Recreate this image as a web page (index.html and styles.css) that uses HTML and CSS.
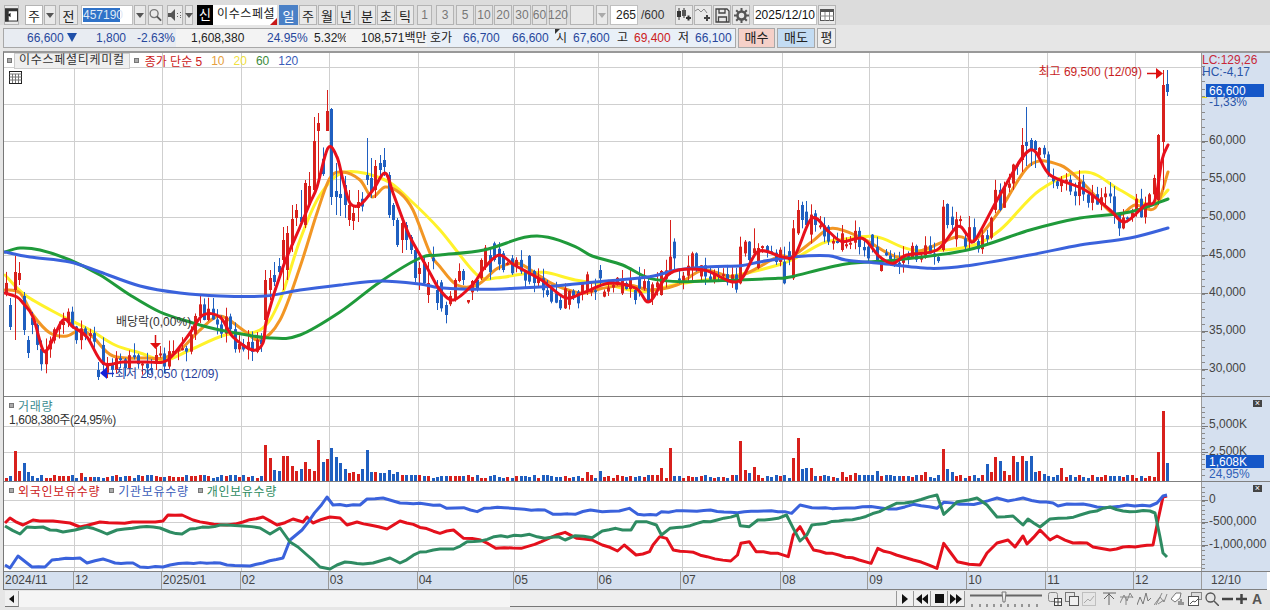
FILE: index.html
```html
<!DOCTYPE html>
<html lang="ko">
<head>
    <meta charset="UTF-8">
    <title>이수스페셜티케미컬 차트</title>
    <link rel="stylesheet" href="styles.css">
</head>
<body>
    <div class="app">
        <div class="toolbar">
            <div class="btn w-screen"><svg width="14" height="14" viewBox="0 0 14 14"><rect x="0.5" y="0.5" width="13" height="13" fill="#fff" stroke="#222"/><path d="M0 0h14v3H0zM0 3h4v11H0z" fill="#333"/><path d="M3 7l3-2.500v5z" fill="#111"/></svg></div>
            <div class="btn w-type white m6">주</div>
            <div class="btn w-drop m1"><i class="caret"></i></div>
            <div class="btn w-jeon m3">전</div>
            <div class="code-input m3"><span class="selected">457190</span></div>
            <div class="btn w-drop m1"><i class="caret"></i></div>
            <div class="btn w-search m2"><svg width="14" height="14" viewBox="0 0 14 14"><circle cx="5.500" cy="5.500" r="4.300" fill="none" stroke="#777" stroke-width="1.500"/><path d="M8.500 8.500l4.500 4.500" stroke="#555" stroke-width="2"/></svg></div>
            <div class="btn w-speaker m4"><svg width="14" height="12" viewBox="0 0 14 12"><path d="M0 4h3l4-4v12l-4-4H0z" fill="#555"/><path d="M9 4h1v1H9zM9 7h1v1H9zM12 3h1v1h-1zM12 6h1v1h-1zM12 8h1v1h-1z" fill="#666"/></svg></div>
            <div class="btn w-dropsm m2"><i class="caret"></i></div>
            <div class="new-tag m4">신</div>
            <div class="name-box">이수스페셜<i class="corner"></i></div>
            <div class="btn w-day active m2">일</div>
            <div class="btn w-per m1">주</div>
            <div class="btn w-per m1">월</div>
            <div class="btn w-per m1">년</div>
            <div class="btn w-per m3">분</div>
            <div class="btn w-per m1">초</div>
            <div class="btn w-per m1">틱</div>
            <div class="btn w-one m3 dim">1</div>
            <div class="btn w-num m4 dim">3</div>
            <div class="btn w-num m2 dim">5</div>
            <div class="btn w-num m1 dim">10</div>
            <div class="btn w-num m1 dim">20</div>
            <div class="btn w-num m1 dim">30</div>
            <div class="btn w-one m1 dim">60</div>
            <div class="btn w-num m2 dim">120</div>
            <div class="btn w-blank m3"></div>
            <div class="btn w-drop m2"><i class="caret light"></i></div>
            <div class="count-box m2">265</div>
            <div class="count-total">/600</div>
            <div class="btn w-tool m11"><svg width="16" height="14" viewBox="0 0 16 14"><path d="M3 0v3M3 9v3M8 0v2M8 8v2" stroke="#333"/><rect x="1" y="3" width="4" height="6" fill="#333"/><rect x="6" y="2" width="4" height="6" fill="#555"/><path d="M10 10h5M12.500 7.500v5" stroke="#333" stroke-width="2"/></svg></div>
            <div class="btn w-tool m1"><svg width="16" height="14" viewBox="0 0 16 14"><path d="M0 3l3-2 3 3 3-3 3 4" fill="none" stroke="#888"/><path d="M9 10h6M12 7v6" stroke="#444" stroke-width="2"/></svg></div>
            <div class="btn w-tool m1"><svg width="15" height="15" viewBox="0 0 15 15"><path d="M1 1h11l2 2v11H1z" fill="none" stroke="#444" stroke-width="1.300"/><path d="M4 1v4h6V1M3.500 14V9h8v5" fill="none" stroke="#444" stroke-width="1.300"/></svg></div>
            <div class="btn w-tool m1"><svg width="15" height="15" viewBox="0 0 15 15"><circle cx="7.500" cy="7.500" r="4" fill="none" stroke="#555" stroke-width="2.500"/><path d="M7.500 0v3M7.500 12v3M0 7.500h3M12 7.500h3M2.200 2.200l2 2M10.800 10.800l2 2M2.200 12.800l2-2M10.800 4.200l2-2" stroke="#555" stroke-width="2"/></svg></div>
            <div class="date-box m3">2025/12/10</div>
            <div class="btn w-tool m1"><svg width="14" height="12" viewBox="0 0 14 12"><rect x="0.500" y="0.500" width="13" height="11" fill="#fff" stroke="#555"/><path d="M0 0h14v3H0z" fill="#555"/><path d="M0 7h14M5 3v9M9.500 3v9" stroke="#888"/></svg></div>
        </div>

        <div class="quote-row">
            <div class="quote-seg seg-price">
                <span class="q-price blue">66,600<i class="down"></i></span>
                <span class="q-chg blue">1,800</span>
                <span class="q-pct blue">-2.63%</span>
            </div>
            <div class="quote-seg seg-vol">
                <span class="q-vol">1,608,380</span>
                <span class="q-turn blue">24.95%</span>
                <span class="q-frn">5.32%</span>
            </div>
            <div class="quote-seg seg-amt">108,571백만</div>
            <div class="quote-seg seg-hoga">
                <span class="q-hoga">호가</span>
                <span class="q-ask blue">66,700</span>
                <span class="q-bid blue">66,600</span>
                <span class="q-open-label"><i class="flag"></i>시</span>
                <span class="q-open blue">67,600</span>
                <span class="q-high-label">고</span>
                <span class="q-high red">69,400</span>
                <span class="q-low-label">저</span>
                <span class="q-low blue">66,100</span>
            </div>
            <div class="order buy">매수</div>
            <div class="order sell">매도</div>
            <div class="order even">평</div>
        </div>

        <div class="charts">
            <div class="pane pane-main">
                <svg class="plot" id="plotMain"></svg>
                <svg class="axis" id="axisMain"></svg>
                <div class="legend">
                    <i class="dot"></i><span class="legend-name">이수스페셜티케미컬</span>
                    <i class="dot"></i><span class="red legend-ma">종가 단순 5</span>
                    <span class="c-orange">10</span><span class="c-yellow">20</span><span class="c-green">60</span><span class="c-blue">120</span>
                </div>
                <div class="grid-btn"><svg width="13" height="13" viewBox="0 0 13 13"><rect x="0.500" y="0.500" width="12" height="12" fill="#fff" stroke="#222"/><path d="M0.500 3h12M0.500 6h12M0.500 9h12M3.500 3v9M6.500 3v9M9.500 3v9" stroke="#777"/></svg></div>
            </div>
            <div class="pane pane-vol">
                <svg class="plot" id="plotVol"></svg>
                <svg class="axis" id="axisVol"></svg>
                <div class="legend legend-sub">
                    <i class="dot"></i><span class="c-teal">거래량</span>
                </div>
                <div class="vol-text">1,608,380주(24,95%)</div>
                <i class="close-x">×</i>
            </div>
            <div class="pane pane-inv">
                <svg class="plot" id="plotInv"></svg>
                <svg class="axis" id="axisInv"></svg>
                <div class="legend legend-sub">
                    <i class="dot"></i><span class="red">외국인보유수량</span>
                    <i class="dot"></i><span class="c-blue">기관보유수량</span>
                    <i class="dot"></i><span class="c-sea">개인보유수량</span>
                </div>
                <i class="close-x">×</i>
            </div>
            <div class="date-axis">
                <div class="date-cells" id="dateCells"></div>
                <div class="date-last">12/10</div>
            </div>
        </div>

        <div class="bottom-bar">
            <div class="scroll-btn"><i class="tri-left"></i></div>
            <div class="scroll-track"></div>
            <div class="scroll-thumb"></div>
            <div class="play-btn"><svg width="8" height="10"><path d="M1 0l6 5-6 5z" fill="#111"/></svg></div>
            <div class="play-btn"><svg width="12" height="10"><path d="M6 0L0 5l6 5zM12 0L6 5l6 5z" fill="#111"/></svg></div>
            <div class="play-btn"><svg width="9" height="9"><rect width="9" height="9" fill="#111"/></svg></div>
            <div class="play-btn"><svg width="12" height="10"><path d="M0 0l6 5-6 5zM6 0l6 5-6 5z" fill="#111"/></svg></div>
            <div class="slider"><svg width="72" height="16"><path d="M0 4.500h33M36 4.500h36" stroke="#666" stroke-width="2"/><path d="M32 1h4l-1 10h-2z" fill="#eee" stroke="#777"/><path d="M2 13v3M10 13v3M17 13v3M24 13v3M31 13v3M38 13v3M45 13v3M52 13v3M59 13v3M67 13v3" stroke="#444"/></svg></div>
            <div class="bar-icons">
                <svg width="14" height="14"><rect x="0.500" y="0.500" width="9" height="9" rx="2" fill="none" stroke="#888"/><rect x="6.500" y="6.500" width="7" height="7" fill="#fff" stroke="#444"/><path d="M10 7v6M7 10h6" stroke="#444"/></svg>
                <svg width="14" height="14"><rect x="0.500" y="0.500" width="9" height="9" fill="none" stroke="#777"/><rect x="4.500" y="4.500" width="9" height="9" fill="#f0f0f0" stroke="#555"/></svg>
                <svg width="14" height="14"><rect x="0.500" y="0.500" width="13" height="13" fill="none" stroke="#999" stroke-dasharray="1 1"/><path d="M2 11l4-4 2 2 4-5" fill="none" stroke="#aaa"/></svg>
                <svg width="14" height="14" class="sep"><path d="M0 1h13M6 1v12M1 7l5-5 5 5" fill="none" stroke="#666"/></svg>
                <svg width="14" height="14"><path d="M0 5h13M6 5v8M0 11l4-8 3 6 3-8 3 5" fill="none" stroke="#888"/></svg>
                <svg width="14" height="14"><path d="M0 13l3-8 3 7 3-11 2 8 3-3" fill="none" stroke="#777"/></svg>
                <svg width="14" height="14"><path d="M0 13l6-8 4 5 3-8M2 13l6-12M4 12l6-4" fill="none" stroke="#888"/></svg>
                <svg width="14" height="14"><path d="M0 7l5-6h5l-1 5-5 4z" fill="#fff" stroke="#777"/><path d="M8 13V9M10 13V7M12 13V10" stroke="#444"/></svg>
                <svg width="14" height="14"><rect x="3.500" y="0.500" width="10" height="7" fill="#ddd" stroke="#888"/><rect x="0.500" y="4.500" width="10" height="9" fill="#fff" stroke="#555"/><path d="M2 12l3-3 2 1 3-3" fill="none" stroke="#555"/></svg>
                <svg width="14" height="14"><circle cx="5.500" cy="5.500" r="4.500" fill="none" stroke="#555" stroke-width="1.300"/><path d="M9 9l5 5" stroke="#555" stroke-width="1.500"/></svg>
                <svg width="11" height="14"><path d="M0 7h11" stroke="#444" stroke-width="2.500"/></svg>
                <svg width="11" height="14"><path d="M0 7h11M5.500 2v10" stroke="#444" stroke-width="2.500"/></svg>
                <span class="font-a">A</span>
            </div>
        </div>
    </div>
    <script src="chart.js"></script>
</body>
</html>
```

FILE: styles.css
```css
body {
    margin: 0;
    width: 1270px;
    height: 610px;
    overflow: hidden;
    background: #e6e6e6;
    font-family: "Liberation Sans", "Noto Sans CJK KR", sans-serif;
    font-size: 12px;
    color: #222;
}
i {
    font-style: normal;
}
svg {
    display: block;
}
.blue { color: #27479c; }
.red { color: #cc2020; }
.c-orange { color: #e6a040; }
.c-yellow { color: #f0e040; }
.c-green { color: #3c8a3c; }
.c-blue { color: #3a5cb8; }
.c-teal { color: #3c8c90; }
.c-sea { color: #2e8b62; }

/* 상단 툴바 */
.toolbar {
    display: flex;
    height: 20px;
    padding: 5px 0 0 4px;
    margin-bottom: 3px;
    background: #dcdcdc;
}
.btn {
    display: flex;
    align-items: center;
    justify-content: center;
    box-sizing: border-box;
    height: 20px;
    background: #e9e9e9;
    border: 1px solid #b4b4b4;
    font-size: 13px;
}
.btn.white { background: #fff; }
.btn.active { background: #4a80c6; color: #fff; border-color: #4a80c6; }
.btn.dim { color: #777; background: #e4e4e4; font-size: 12px; }
.m1 { margin-left: 1px; }
.m2 { margin-left: 2px; }
.m3 { margin-left: 3px; }
.m4 { margin-left: 4px; }
.m6 { margin-left: 6px; }
.m11 { margin-left: 11px; }
.w-screen { width: 15px; }
.w-type { width: 18px; }
.w-drop { width: 12px; }
.w-dropsm { width: 8px; }
.w-jeon { width: 19px; }
.w-search { width: 15px; }
.w-speaker { width: 16px; }
.w-day { width: 19px; }
.w-per { width: 18px; }
.w-one { width: 15px; }
.w-num { width: 18px; }
.w-blank { width: 24px; }
.w-tool { width: 18px; }
.caret {
    width: 0;
    height: 0;
    border-left: 4px solid transparent;
    border-right: 4px solid transparent;
    border-top: 5px solid #555;
}
.caret.light { border-top-color: #aaa; }
.code-input {
    box-sizing: border-box;
    width: 52px;
    height: 20px;
    padding: 2px 1px;
    background: #fff;
    border: 1px solid #c0c0c0;
    line-height: 14px;
}
.selected {
    display: block;
    width: 37px;
    background: #2f72c8;
    color: #dfe8f5;
}
.new-tag {
    width: 16px;
    height: 20px;
    background: #000;
    color: #fff;
    text-align: center;
    line-height: 20px;
    font-size: 13px;
}
.name-box {
    position: relative;
    box-sizing: border-box;
    width: 64px;
    height: 20px;
    padding-left: 4px;
    overflow: hidden;
    background: #fff;
    line-height: 19px;
    font-size: 12px;
    letter-spacing: 0.6px;
    white-space: nowrap;
}
.corner {
    position: absolute;
    right: 0;
    bottom: 0;
    border-left: 7px solid transparent;
    border-bottom: 7px solid #c81818;
}
.count-box, .date-box {
    box-sizing: border-box;
    height: 20px;
    background: #fff;
    border: 1px solid #c0c0c0;
    line-height: 18px;
    text-align: right;
    padding-right: 1px;
}
.count-box { width: 28px; }
.count-total { width: 23px; padding-left: 3px; line-height: 20px; color: #333; }
.date-box { width: 64px; color: #111; }

/* 시세 행 */
.quote-row {
    display: flex;
    height: 20px;
    padding-left: 3px;
    margin-bottom: 3px;
}
.quote-seg {
    position: relative;
    box-sizing: border-box;
    height: 20px;
    border-top: 1px solid #a8a8a8;
    border-bottom: 1px solid #a8a8a8;
    line-height: 18px;
    white-space: nowrap;
}
.quote-seg span { position: absolute; top: 0; }
.seg-price { width: 173px; background: #e8ecf2; border-left: 1px solid #a8a8a8; }
.seg-vol { width: 170px; background: #f3f3f3; }
.seg-amt { width: 81px; padding-left: 15px; background: #f3f3f3; }
.seg-hoga { width: 309px; background: #e9f0f8; border-right: 1px solid #a8a8a8; }
.q-price { left: 23px; }
.q-chg { left: 92px; }
.q-pct { left: 133px; }
.q-vol { left: 15px; }
.q-turn { left: 91px; }
.q-frn { left: 138px; }
.q-hoga { left: 3px; }
.q-ask { left: 36px; }
.q-bid { left: 85px; }
.q-open-label { left: 129px; }
.q-open { left: 146px; }
.q-high-label { left: 190px; }
.q-high { left: 207px; }
.q-low-label { left: 251px; }
.q-low { left: 268px; }
.down {
    display: inline-block;
    margin-left: 3px;
    border-left: 5px solid transparent;
    border-right: 5px solid transparent;
    border-top: 9px solid #1f4fa8;
}
.flag {
    position: absolute;
    left: -1px;
    top: 0;
    border-top: 5px solid #333;
    border-right: 5px solid transparent;
}
.order {
    box-sizing: border-box;
    height: 20px;
    margin-left: 3px;
    border: 1px solid #a8a8a8;
    text-align: center;
    line-height: 18px;
    font-size: 13px;
}
.buy { width: 37px; margin-left: 2px; background: #f5d0c8; }
.sell { width: 38px; margin-left: 2px; background: #c3dcf3; }
.even { width: 19px; margin-left: 2px; background: #eee; }

/* 차트 영역 */
.charts {
    box-sizing: border-box;
    height: 539px;
    margin-left: 3px;
    border-top: 2px solid #999;
    border-left: 1px solid #777;
    background: #fff;
}
.pane {
    position: relative;
    display: flex;
    box-sizing: border-box;
    border-bottom: 1px solid #808080;
}
.pane-main { height: 344px; }
.pane-vol { height: 85px; }
.pane-inv { height: 90px; }
.plot {
    width: 1197px;
    height: 100%;
    flex: none;
}
.axis {
    width: 68px;
    height: 100%;
    flex: none;
    background: #d5e0ef;
    border-left: 1px solid #9a9a9a;
}
.plot text, .axis text {
    font-family: "Liberation Sans", "Noto Sans CJK KR", sans-serif;
    font-size: 12px;
}
.legend {
    position: absolute;
    left: 3px;
    top: 0;
    display: flex;
    align-items: center;
    height: 15px;
    white-space: nowrap;
}
.legend .dot {
    box-sizing: border-box;
    width: 5px;
    height: 5px;
    background: #aaa;
    border: 1px solid #777;
}
.legend-name {
    height: 14px;
    margin: 0 4px 0 2px;
    padding: 0 4px;
    background: #efefef;
    border: 1px solid #ccc;
    line-height: 13px;
    letter-spacing: 0.7px;
    color: #333;
}
.legend-ma { margin: 0 9px 0 6px; }
.c-orange, .c-yellow, .c-green { margin-right: 9px; }
.legend-sub { left: 5px; top: 1px; }
.legend-sub .dot { margin-right: 4px; }
.legend-sub span { margin-right: 9px; letter-spacing: 0.7px; }
.vol-text {
    position: absolute;
    left: 5px;
    top: 13px;
    font-size: 12px;
    letter-spacing: -0.35px;
    color: #333;
}
.grid-btn {
    position: absolute;
    left: 5px;
    top: 18px;
}
.close-x {
    position: absolute;
    right: 8px;
    top: 3px;
    width: 9px;
    height: 7px;
    background: #444;
    color: #fff;
    font-size: 9px;
    line-height: 7px;
    text-align: center;
}
.date-axis {
    display: flex;
    height: 17px;
    margin-right: 3px;
    background: #d5e0ef;
    border-bottom: 1px solid #808080;
}
.date-cells {
    display: flex;
    width: 1198px;
    flex: none;
    border-right: 1px solid #9a9a9a;
    box-sizing: border-box;
}
.date-cell {
    box-sizing: border-box;
    padding-left: 1px;
    line-height: 17px;
    color: #444;
    border-right: 1px solid #999;
}
.date-cell:last-child { border-right: 0; }
.date-last { padding-left: 9px; line-height: 17px; color: #444; }

/* 하단 바 */
.bottom-bar {
    position: relative;
    display: flex;
    align-items: center;
    height: 18px;
    padding-left: 5px;
}
.scroll-btn {
    display: flex;
    align-items: center;
    justify-content: center;
    box-sizing: border-box;
    width: 14px;
    height: 16px;
    background: #f0f0f0;
    border-right: 1px solid #999;
    border-bottom: 1px solid #777;
}
.tri-left {
    border-top: 4px solid transparent;
    border-bottom: 4px solid transparent;
    border-right: 5px solid #111;
}
.scroll-track {
    width: 491px;
    height: 16px;
    background: #f5f5f5;
}
.scroll-thumb {
    box-sizing: border-box;
    width: 387px;
    height: 16px;
    background: #efefef;
    border-bottom: 1px solid #777;
    border-right: 1px solid #999;
}
.play-btn {
    display: flex;
    align-items: center;
    justify-content: center;
    box-sizing: border-box;
    width: 17px;
    height: 16px;
    background: #f0f0f0;
    border-right: 1px solid #999;
    border-bottom: 1px solid #777;
}
.slider { margin-left: 5px; }
.bar-icons {
    display: flex;
    align-items: center;
    gap: 3px;
    margin-left: 6px;
}
.bar-icons .sep { margin-left: 4px; }
.font-a { font-weight: 700; font-size: 14px; color: #555; margin-left: 2px; }
```

FILE: chart.js
```js
const NS = 'http://www.w3.org/2000/svg';

// 확대 캡처에서 읽은 중간 구간 좌표를 화면 좌표로
function mid(points) {
    return points.map(p => [440 + p[0] / 2.958, 195 + p[1] / 3]);
}

// 이동평균선 (x, y 화면 좌표)
const ma5 = [[5,293],[17,297],[23,303],[33,317],[43,350],[50,345],[63,320],[73,327],[87,337],[103,363],[123,362],[147,362],[163,362],[173,355],[190,333],[203,315],[220,317],[233,337],[253,350],[263,343],[267,318],[283,267],[300,227],[310,203],[317,187],[328,148],[337,157],[343,180],[350,203],[360,205],[373,190],[385,173],[393,193],[403,220],[410,237],[420,255],[430,273]]
    .concat(mid([[0,285],[40,315],[100,265],[130,220],[175,180],[220,210],[300,255],[370,308],[420,295],[500,265],[580,280],[620,320],[680,235],[780,225],[880,260],[940,170],[1010,185],[1050,180],[1100,70],[1150,110],[1190,140],[1250,130],[1300,185],[1340,205],[1380,180],[1470,165],[1530,95],[1560,120]]))
    .concat([[975,240],[1000,195],[1030,150],[1050,175],[1085,190],[1110,210],[1125,222],[1145,205],[1155,200],[1162,160],[1168,145]]);
const ma10 = [[5,290],[20,293],[33,315],[50,333],[67,336],[80,330],[93,337],[113,356],[147,358],[163,358],[180,350],[200,330],[220,316],[243,330],[260,340],[280,320],[300,267],[317,213],[330,178],[343,172],[360,180],[372,197],[385,187],[400,193],[413,210],[430,253]]
    .concat(mid([[0,215],[50,270],[110,270],[170,220],[230,205],[290,240],[340,270],[420,295],[480,280],[560,270],[620,285],[700,270],[780,225],[880,245],[1000,185],[1040,185],[1100,140],[1160,100],[1250,130],[1350,185],[1430,165],[1530,125]]))
    .concat([[975,240],[1000,210],[1030,165],[1060,165],[1085,185],[1115,215],[1135,205],[1155,208],[1168,172]]);
const ma20 = [[5,275],[25,295],[60,315],[90,330],[115,345],[140,353],[165,360],[190,350],[225,335],[260,330],[280,300],[300,240],[320,195],[345,172],[385,180],[410,200]]
    .concat(mid([[0,105],[110,240],[170,248],[240,238],[310,232],[400,255],[500,270],[600,290],[700,268],[880,240],[1000,210],[1050,190],[1130,145],[1180,135],[1290,125],[1400,165],[1560,155]]))
    .concat([[1000,230],[1040,190],[1085,172],[1120,190],[1150,205],[1168,190]]);
const ma60 = [[5,252],[20,248],[40,250],[70,260],[100,275],[130,295],[160,312],[190,322],[220,330],[270,338],[300,335],[340,312],[380,282],[420,258]]
    .concat(mid([[0,180],[130,165],[250,127],[320,127],[400,155],[450,183],[540,210],[620,250],[720,260],[880,255],[1000,250],[1040,245],[1200,207],[1350,195],[1560,165]]))
    .concat([[1030,230],[1080,218],[1130,212],[1168,199]]);
const ma120 = [[5,252],[30,257],[70,262],[100,272],[140,286],[180,293],[220,296],[265,296],[300,290],[340,285],[380,281],[420,284]]
    .concat(mid([[0,278],[130,283],[250,278],[350,272],[450,262],[620,245],[700,225],[800,215],[890,212],[950,200],[1050,185],[1150,182],[1200,195],[1300,205],[1450,220],[1560,212]]))
    .concat([[1030,255],[1080,245],[1130,238],[1168,228]]);

// 투자자별 보유수량
const foreign = [[5,523],[10,518],[23,525],[33,520],[53,521],[70,523],[80,527],[100,522],[117,523],[140,522],[163,521],[168,515],[182,515],[193,520],[207,523],[227,525],[243,522],[263,517],[277,525],[293,519],[303,522],[307,517],[313,523],[330,517],[340,518],[347,525],[357,522],[370,525],[387,529],[400,521]]
    .concat(mid([[0,1015],[40,1005],[70,1030],[120,1035],[165,1060],[190,1058],[240,1060],[300,1040],[370,1012],[405,1030],[450,1035],[480,1050],[525,1068],[545,1050],[580,1080],[620,1070],[630,1050],[650,1025],[670,1030],[690,1065],[750,1072],[790,1085],[860,1098],[880,1080],[890,1045],[915,1040],[935,1070],[1000,1075],[1030,1085],[1045,1020],[1065,995],[1090,1040],[1105,1065],[1180,1080],[1240,1095],[1275,1105],[1295,1060],[1350,1080],[1400,1095],[1470,1120],[1490,1045],[1530,1100],[1565,1108]]))
    .concat([[980,565],[987,553],[997,543],[1008,540],[1015,547],[1023,536],[1027,544],[1040,530],[1050,540],[1057,536],[1073,543],[1087,543],[1093,547],[1110,550],[1123,547],[1153,545],[1158,520],[1163,497],[1167,496]]);
const institution = [[5,565],[10,568],[18,556],[32,567],[45,567],[52,560],[80,558],[87,563],[103,559],[115,563],[133,563],[140,567],[163,567],[170,565],[187,563],[220,563],[227,565],[250,566],[263,563],[283,558],[290,540],[302,530],[327,497],[333,505],[360,505],[367,499],[383,498],[400,503]]
    .concat(mid([[0,930],[20,940],[70,938],[110,950],[130,940],[190,938],[250,943],[310,945],[335,958],[400,958],[445,945],[480,950],[530,948],[560,940],[585,958],[640,960],[655,950],[740,948],[800,945],[860,952],[960,948],[1020,950],[1040,955],[1065,930],[1100,938],[1180,940],[1250,935],[1300,938],[1350,942],[1400,928],[1470,940],[1490,922],[1560,928]]))
    .concat([[980,503],[997,498],[1008,501],[1023,498],[1040,502],[1053,503],[1058,506],[1067,504],[1083,504],[1097,507],[1113,507],[1127,505],[1150,506],[1157,503],[1163,496],[1167,495]]);
const individual = [[5,526],[20,534],[27,527],[43,527],[50,530],[63,532],[87,527],[107,534],[117,530],[140,527],[160,528],[170,532],[182,534],[190,529],[227,525],[243,526],[260,528],[270,534],[280,528],[290,542],[298,547],[307,555],[320,567],[330,569],[337,565],[345,562],[363,564],[373,563],[390,558],[400,563],[420,552]]
    .concat(mid([[0,1062],[40,1062],[80,1040],[120,1038],[160,1025],[240,1022],[265,1018],[310,1030],[350,1025],[370,1035],[400,1022],[450,1028],[480,1008],[520,1000],[540,1005],[565,1005],[580,980],[610,980],[640,990],[655,1020],[680,1000],[740,992],[760,985],[820,975],[880,960],[888,992],[915,995],[940,975],[1000,970],[1025,960],[1045,1000],[1065,1038],[1085,1020],[1100,990],[1180,978],[1240,970],[1300,950],[1350,925],[1400,920],[1470,900],[1490,958],[1530,920],[1565,915]]))
    .concat([[977,498],[987,505],[997,517],[1013,516],[1023,525],[1028,519],[1040,527],[1050,519],[1067,518],[1080,515],[1090,512],[1110,507],[1123,511],[1150,511],[1155,513],[1160,537],[1163,553],[1167,557]]);

// 눈에 띄는 봉: x, 몸통 위, 몸통 아래, 고가, 저가, 색
const fixedCandles = [
    [10,305,327,298,330,'b'],[14,272,290,256,340,'r'],[19,273,280,262,285,'r'],[23,296,330,292,335,'b'],[28,340,353,336,358,'b'],
    [99,370,377,362,380,'b'],[155,355,362,348,370,'r'],
    [265,280,320,270,330,'r'],[270,278,290,270,300,'r'],[274,275,282,262,286,'b'],[279,266,272,258,280,'b'],
    [284,240,260,227,290,'r'],[287,233,270,226,280,'r'],[292,219,245,205,252,'r'],[296,210,218,204,226,'r'],[300,217,222,190,225,'b'],
    [305,183,225,180,228,'r'],[309,186,205,172,206,'r'],[315,141,190,117,194,'r'],[319,123,131,113,180,'r'],[328,111,131,90,131,'r'],[331,109,197,108,205,'b'],
    [336,191,197,163,215,'b'],[341,194,198,170,216,'b'],[345,185,205,176,218,'b'],[349,205,220,190,226,'r'],[353,213,221,205,230,'r'],[358,202,208,190,222,'r'],
    [366,175,180,138,185,'b'],[371,178,192,158,198,'b'],[375,166,190,160,198,'r'],[380,163,170,155,178,'b'],[384,160,167,148,176,'b'],[388,175,215,172,218,'b'],
    [393,205,220,203,226,'b'],[397,220,245,218,247,'b'],[403,223,240,222,253,'r'],[408,225,240,222,250,'b'],[410,237,250,235,254,'b'],[416,250,278,248,282,'b'],
    [420,268,274,262,290,'r'],[424,262,283,258,286,'b'],[428,283,295,262,303,'r'],[436,290,303,280,310,'b'],
    [1026,142,146,107,166,'b'],[1023,145,160,128,172,'r'],[1031,140,150,138,166,'b'],[1036,141,150,140,168,'b'],
    [1159,135,200,134,205,'r'],[1163,85,142,70,190,'r'],[1167,84,92,70,96,'b']
];
const fixedMid = [
    [0,262,340,255,350,'b'],[18,330,360,320,385,'b'],[42,255,315,250,320,'r'],[55,228,258,205,262,'r'],[70,228,255,222,270,'b'],[97,258,292,255,315,'r'],[108,255,285,250,290,'b'],[123,195,250,190,255,'r'],[135,158,215,150,225,'r'],[160,145,195,140,200,'b'],[187,175,225,168,232,'b'],[213,190,235,180,240,'b'],[263,183,260,180,268,'b'],[330,280,320,270,325,'b'],[357,315,340,300,345,'b'],[368,280,340,265,342,'r'],[408,290,325,285,340,'b'],[433,238,290,230,300,'r'],[475,225,250,210,270,'b'],[540,255,295,225,300,'r'],[578,285,315,280,328,'b'],[628,268,310,262,330,'r'],
    [655,228,300,225,302,'r'],[682,185,235,75,240,'r'],[693,140,190,130,225,'b'],[745,175,225,170,258,'r'],[757,175,225,172,230,'b'],[888,155,265,125,268,'r'],[903,140,175,135,185,'r'],[915,140,195,138,200,'b'],[930,160,175,100,180,'r'],[1018,200,265,155,268,'b'],[1045,100,250,75,255,'r'],[1060,45,115,15,120,'r'],[1072,30,75,20,100,'b'],[1085,50,90,18,95,'b'],[1110,55,90,45,110,'b'],[1150,95,140,90,150,'b'],[1190,115,165,90,170,'r'],[1268,155,190,150,200,'b'],[1305,195,228,185,230,'r'],[1489,35,165,15,170,'r'],[1502,27,90,25,100,'b'],[1515,65,90,35,115,'b'],[1550,130,155,115,165,'b']
];

// 거래량이 큰 날: x, 높이
const volSpikes = [[6,3],[10,5],[14,30],[19,10],[23,18],[28,9],[32,5],[80,8],[265,36],[270,23],[274,11],[279,10],[283,25],[287,25],[292,15],[296,10],[300,12],[305,19],[309,12],[314,10],[318,41],[323,19],[327,22],[331,33],[336,24],[340,18],[345,12],[349,8],[353,9],[358,7],[362,12],[366,31],[371,9],[375,9],[380,8],[384,8],[388,11],[393,7],[397,9],
    [986,17],[991,9],[995,24],[999,20],[1003,10],[1012,25],[1016,19],[1021,25],[1025,20],[1029,25],[1033,12],[1037,9],[1041,10],[1046,7],[1061,13],[1159,29],[1163,70],[1167,18]];
const volMid = [[433,9],[475,10],[655,13],[682,33],[888,40],[903,11],[915,8],[930,14],[1045,23],[1060,43],[1072,12],[1085,13],[1098,13],[1190,9],[1228,8],[1290,10],[1437,9],[1489,32],[1502,12],[1515,9]];

const STEP = (1167 - 6) / 264;
const COUNT = 265;
const COLORS = { r: '#d8201c', b: '#1f5fc0' };

let seed = 7;
function rnd() {
    seed = (seed * 16807) % 2147483647;
    return seed / 2147483647;
}

function el(parent, name, attrs, text) {
    const node = document.createElementNS(NS, name);
    for (const key in attrs) node.setAttribute(key, attrs[key]);
    if (text) node.textContent = text;
    parent.appendChild(node);
    return node;
}

function interp(line, x) {
    for (let i = 1; i < line.length; i++) {
        if (x <= line[i][0]) {
            const t = (x - line[i - 1][0]) / (line[i][0] - line[i - 1][0]);
            return line[i - 1][1] + (line[i][1] - line[i - 1][1]) * t;
        }
    }
    return line[line.length - 1][1];
}

function indexOfX(x) {
    return Math.round((x - 6) / STEP);
}

function setView(svg, x, y, w, h) {
    svg.setAttribute('viewBox', `${x} ${y} ${w} ${h}`);
}

const VLINES = [74, 162, 241, 329, 418, 514, 598, 682, 782, 869, 968, 1047, 1135];

function grid(svg, hlines, y0, y1) {
    hlines.forEach(y => el(svg, 'path', { d: `M4 ${y + 0.5}H1201`, stroke: '#cfcfcf', fill: 'none' }));
    VLINES.forEach(x => el(svg, 'path', { d: `M${x + 0.5} ${y0}V${y1}`, stroke: '#cfcfcf', fill: 'none' }));
}

// 이평선은 부드럽게 (Catmull-Rom)
function drawSmooth(svg, line, color) {
    let d = `M${line[0][0]} ${line[0][1]}`;
    for (let i = 0; i < line.length - 1; i++) {
        const p0 = line[Math.max(i - 1, 0)];
        const p1 = line[i];
        const p2 = line[i + 1];
        const p3 = line[Math.min(i + 2, line.length - 1)];
        const c1 = [p1[0] + (p2[0] - p0[0]) / 6, p1[1] + (p2[1] - p0[1]) / 6];
        const c2 = [p2[0] - (p3[0] - p1[0]) / 6, p2[1] - (p3[1] - p1[1]) / 6];
        d += `C${c1[0]} ${c1[1]} ${c2[0]} ${c2[1]} ${p2[0]} ${p2[1]}`;
    }
    el(svg, 'path', { d, fill: 'none', stroke: color, 'stroke-width': 3, 'stroke-linecap': 'round' });
}

// 보유수량은 자잘하게 흔들리도록 점을 채워 넣음
function drawJagged(svg, line, color) {
    const pts = [];
    line.forEach((p, i) => {
        pts.push(p);
        const next = line[i + 1];
        if (!next) return;
        const n = Math.floor((next[0] - p[0]) / 6);
        for (let k = 1; k < n; k++) {
            const t = k / n;
            pts.push([p[0] + (next[0] - p[0]) * t, p[1] + (next[1] - p[1]) * t + (rnd() - 0.5) * 1.6]);
        }
    });
    el(svg, 'polyline', {
        points: pts.map(p => p.join(',')).join(' '),
        fill: 'none',
        stroke: color,
        'stroke-width': 3,
        'stroke-linejoin': 'round'
    });
}

function buildCandles() {
    const list = [];
    let prev = interp(ma5, 6);
    for (let i = 0; i < COUNT; i++) {
        const x = 6 + STEP * i;
        const slope = Math.abs(interp(ma5, x + 4) - interp(ma5, x - 4));
        const amp = 8 + slope * 0.9;
        const close = interp(ma5, x) + (rnd() - 0.5) * amp * 2;
        let top = Math.min(prev, close);
        let bot = Math.max(prev, close);
        if (bot - top > 20) bot = top + 20;
        if (bot - top < 2) bot = top + 2;
        list.push({
            x,
            top,
            bot,
            hi: top - rnd() * 12,
            lo: Math.min(bot + rnd() * 10, 378),
            color: close < prev ? 'r' : 'b'
        });
        prev = close;
    }
    const put = f => {
        const i = indexOfX(f[0]);
        list[i] = { x: 6 + STEP * i, top: f[1], bot: f[2], hi: f[3], lo: f[4], color: f[5] };
    };
    fixedCandles.forEach(put);
    fixedMid.forEach(f => {
        const y = v => 195 + v / 3;
        put([440 + f[0] / 2.958, y(f[1]), y(f[2]), y(f[3]), y(f[4]), f[5]]);
    });
    return list;
}

function axisTicks(svg, y0, y1, step) {
    for (let y = y0; y <= y1; y += step) {
        el(svg, 'path', { d: `M1202 ${Math.round(y) + 0.5}h3`, stroke: '#8a8a8a' });
    }
}

function label(svg, x, y, text, color, anchor) {
    el(svg, 'text', { x, y, fill: color || '#444', 'text-anchor': anchor || 'start' }, text);
}

// 가격 차트
const plotMain = document.getElementById('plotMain');
const axisMain = document.getElementById('axisMain');
setView(plotMain, 4, 53, 1197, 343);
setView(axisMain, 1202, 53, 68, 343);
grid(plotMain, [67, 104, 141, 179, 217, 255, 293, 331, 369], 53, 396);

drawSmooth(plotMain, ma20, '#fff22a');
drawSmooth(plotMain, ma10, '#f29624');
const candles = buildCandles();
candles.forEach(c => {
    const x = Math.round(c.x);
    el(plotMain, 'path', { d: `M${x + 0.5} ${c.hi}V${c.lo}`, stroke: COLORS[c.color] });
    el(plotMain, 'rect', { x: x - 1, y: c.top, width: 3, height: c.bot - c.top, fill: COLORS[c.color] });
});
drawSmooth(plotMain, ma60, '#1f9a3a');
drawSmooth(plotMain, ma120, '#3a62dc');
drawSmooth(plotMain, ma5, '#e8101c');

label(plotMain, 1142, 76, '최고 69,500 (12/09)', '#c81e1e', 'end');
el(plotMain, 'path', { d: 'M1147 73.500h10', stroke: '#d81010', 'stroke-width': 1.500 });
el(plotMain, 'path', { d: 'M1156 68v11l7-5.500z', fill: '#e00f0f' });
label(plotMain, 115, 378, '최저 29,050 (12/09)', '#2a3f9c');
el(plotMain, 'path', { d: 'M106 373.500h8', stroke: '#2030c8', 'stroke-width': 1.500 });
el(plotMain, 'path', { d: 'M107 367v12l-7-6z', fill: '#1420d8' });
label(plotMain, 116, 326, '배당락(0,00%)', '#333');
el(plotMain, 'path', { d: 'M155.500 335v8', stroke: '#d81010', 'stroke-width': 1.500 });
el(plotMain, 'path', { d: 'M150 343h11l-5.500 6z', fill: '#e00f0f' });

axisTicks(axisMain, 66, 396, 7.6);
[[141, '60,000'], [179, '55,000'], [217, '50,000'], [255, '45,000'], [293, '40,000'], [331, '35,000'], [369, '30,000']].forEach(row => {
    el(axisMain, 'path', { d: `M1202 ${row[0] + 0.5}h6`, stroke: '#777' });
    label(axisMain, 1209, row[0] + 3, row[1]);
});
label(axisMain, 1202, 64, 'LC:129,26', '#c82838');
label(axisMain, 1202, 76, 'HC:-4,17', '#2a55a8');
el(axisMain, 'rect', { x: 1206, y: 84, width: 58, height: 13, fill: '#1557c8' });
label(axisMain, 1209, 95, '66,600', '#fff');
label(axisMain, 1209, 106, '-1,33%', '#2a55a8');
el(axisMain, 'path', { d: 'M1202 97.500h5', stroke: '#e8e020' });

// 거래량
const plotVol = document.getElementById('plotVol');
const axisVol = document.getElementById('axisVol');
setView(plotVol, 4, 397, 1197, 84);
setView(axisVol, 1202, 397, 68, 84);
grid(plotVol, [426, 452], 397, 481);
const volumes = candles.map(() => 3 + Math.round(rnd() * 3.5));
volSpikes.forEach(s => { volumes[indexOfX(s[0])] = s[1]; });
volMid.forEach(s => { volumes[indexOfX(440 + s[0] / 2.958)] = s[1]; });
candles.forEach((c, i) => {
    el(plotVol, 'rect', { x: Math.round(c.x) - 1, y: 481 - volumes[i], width: 3, height: volumes[i], fill: COLORS[c.color] });
});
axisTicks(axisVol, 407, 478, 5.2);
el(axisVol, 'path', { d: 'M1202 426.500h6M1202 452.500h6', stroke: '#777' });
label(axisVol, 1209, 428, '5,000K');
label(axisVol, 1209, 455, '2,500K');
el(axisVol, 'rect', { x: 1206, y: 455, width: 58, height: 13, fill: '#1557c8' });
label(axisVol, 1209, 466, '1,608K', '#fff');
label(axisVol, 1209, 478, '24,95%', '#3060b8');

// 보유수량
const plotInv = document.getElementById('plotInv');
const axisInv = document.getElementById('axisInv');
setView(plotInv, 4, 482, 1197, 89);
setView(axisInv, 1202, 482, 68, 89);
grid(plotInv, [500, 522, 545, 567], 482, 571);
drawJagged(plotInv, foreign, '#e4101c');
drawJagged(plotInv, institution, '#3a62dc');
drawJagged(plotInv, individual, '#2e8b62');
axisTicks(axisInv, 487, 570, 4.5);
[[500, '0'], [522, '-500,000'], [545, '-1,000,000']].forEach(row => {
    el(axisInv, 'path', { d: `M1202 ${row[0] + 0.5}h6`, stroke: '#777' });
    label(axisInv, 1209, row[0] + 3, row[1]);
});

// 날짜 축
const dateCells = document.getElementById('dateCells');
const months = ['2024/11', '12', '2025/01', '02', '03', '04', '05', '06', '07', '08', '09', '10', '11', '12'];
const edges = [4].concat(VLINES, [1202]);
months.forEach((name, i) => {
    const cell = document.createElement('div');
    cell.className = 'date-cell';
    cell.textContent = name;
    cell.style.width = (edges[i + 1] - edges[i]) + 'px';
    dateCells.appendChild(cell);
});
```
